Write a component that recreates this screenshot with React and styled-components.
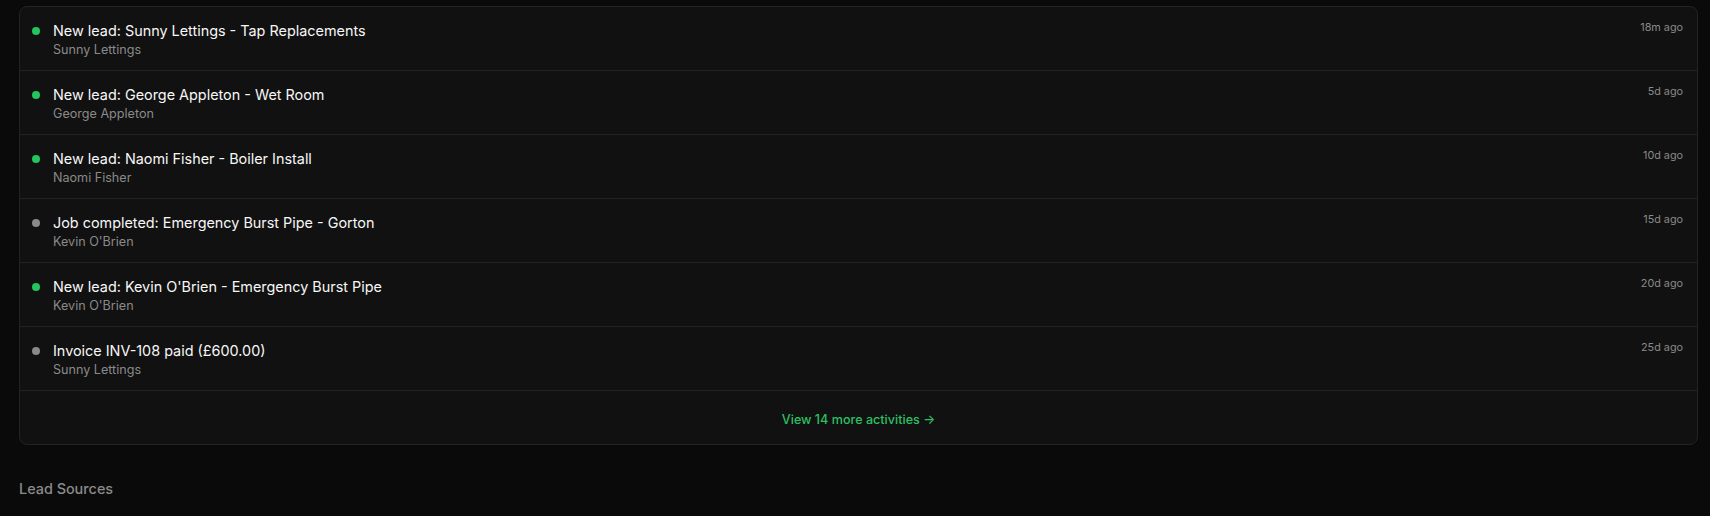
import React from "react"
import styled, { createGlobalStyle } from "styled-components"

const GlobalStyle = createGlobalStyle`
  html, body {
    margin: 0;
    background: #0a0a0a;
    font-family: Inter, "Noto Sans", sans-serif;
    -webkit-font-smoothing: antialiased;
  }
`

const Page = styled.div`
  padding: 6px 12px 0 19px;
  min-height: 510px;
  background: #0a0a0a;
`

const Card = styled.div`
  background: #111111;
  border: 1px solid #232323;
  border-radius: 8px;
  overflow: hidden;
`

const Row = styled.div`
  display: flex;
  align-items: flex-start;
  gap: 13px;
  padding: 14px 14px 12px 12px;
  border-bottom: 1px solid #222222;
`

const Dot = styled.span`
  flex: none;
  width: 8px;
  height: 8px;
  margin-top: 6px;
  border-radius: 50%;
  background: ${(p) => (p.$active ? "#22c55e" : "#8a8a8a")};
`

const Body = styled.div`
  flex: 1;
  min-width: 0;
`

const Title = styled.div`
  color: #f7f7f7;
  font-size: 14.4px;
  line-height: 20px;
  font-weight: 400;
`

const Sub = styled.div`
  color: #8a8a8a;
  font-size: 12.6px;
  line-height: 16px;
  margin-top: 1px;
`

const Time = styled.div`
  flex: none;
  color: #8a8a8a;
  font-size: 10.8px;
  line-height: 16px;
  margin-top: -1px;
`

const Footer = styled.div`
  padding: 19px 16px 14px;
  text-align: center;
  font-size: 12.6px;
  line-height: 20px;
  font-weight: 500;
  color: #2cc062;
`

const SectionTitle = styled.h2`
  margin: 33px 0 0;
  color: #8a8a8a;
  font-size: 14.4px;
  line-height: 22px;
  font-weight: 500;
`

const activities = [
  { title: "New lead: Sunny Lettings - Tap Replacements", who: "Sunny Lettings", when: "18m ago", active: true },
  { title: "New lead: George Appleton - Wet Room", who: "George Appleton", when: "5d ago", active: true },
  { title: "New lead: Naomi Fisher - Boiler Install", who: "Naomi Fisher", when: "10d ago", active: true },
  { title: "Job completed: Emergency Burst Pipe - Gorton", who: "Kevin O'Brien", when: "15d ago", active: false },
  { title: "New lead: Kevin O'Brien - Emergency Burst Pipe", who: "Kevin O'Brien", when: "20d ago", active: true },
  { title: "Invoice INV-108 paid (£600.00)", who: "Sunny Lettings", when: "25d ago", active: false },
]

const App = () => {
  return (
    <Page>
      <GlobalStyle />
      <Card>
        {activities.map((a) => (
          <Row key={a.title}>
            <Dot $active={a.active} />
            <Body>
              <Title>{a.title}</Title>
              <Sub>{a.who}</Sub>
            </Body>
            <Time>{a.when}</Time>
          </Row>
        ))}
        <Footer>View 14 more activities →</Footer>
      </Card>
      <SectionTitle>Lead Sources</SectionTitle>
    </Page>
  )
}

export default App
